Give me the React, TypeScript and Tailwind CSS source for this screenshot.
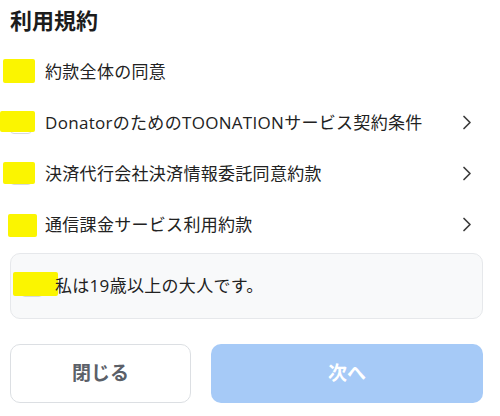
import React from "react";

const font = { fontFamily: '"Open Sans", "Noto Sans CJK JP", sans-serif' };

function Marker({ cls }: { cls: string }) {
  return (
    <span className="relative inline-block w-[22px] h-[22px] shrink-0">
      <span className="absolute inset-0 rounded-[4px] border border-[#d6d9de] bg-white" />
      <span className={`absolute bg-[#fbf500] rounded-[2px] ${cls}`} />
    </span>
  );
}

function Chevron() {
  return (
    <svg width="10" height="15" viewBox="0 0 10 15" className="shrink-0">
      <path d="M2 1.5 L8 7.5 L2 13.5" fill="none" stroke="#3c3c3c" strokeWidth="1.7" strokeLinecap="round" strokeLinejoin="round" />
    </svg>
  );
}

const rows = [
  { text: "約款全体の同意", chev: false, m: "left-[-7px] top-[-2px] w-[32px] h-[24px]" },
  { text: "DonatorのためのTOONATIONサービス契約条件", chev: true, m: "left-[-10px] top-[-1px] w-[35px] h-[21px]" },
  { text: "決済代行会社決済情報委託同意約款", chev: true, m: "left-[-7px] top-[-1px] w-[32px] h-[22px]" },
  { text: "通信課金サービス利用約款", chev: true, m: "left-[-2px] top-[0px] w-[29px] h-[23px]" },
];

export default function App() {
  return (
    <div className="w-[500px] h-[416px] bg-white overflow-hidden px-[10px] pt-[4px]" style={font}>
      <h1 className="text-[22px] leading-[32px] font-bold text-[#1c1c1c]">利用規約</h1>
      <div className="mt-[10px] flex flex-col">
        {rows.map((r, i) => (
          <div key={i} className="h-[51px] flex items-center pr-[18px]">
            <Marker cls={r.m} />
            <span className="ml-[13px] text-[17px] tracking-[0.3px] text-[#222] flex-1">{r.text}</span>
            {r.chev && <Chevron />}
          </div>
        ))}
      </div>
      <div className="mt-[3px] h-[66px] w-[473px] rounded-[10px] border border-[#e6e8eb] bg-[#f8f9fa] flex items-center pl-[10px]">
        <Marker cls="left-[-8px] top-[-3px] w-[45px] h-[24px]" />
        <span className="relative ml-[12px] text-[17px] tracking-[0.3px] text-[#222]">私は19歳以上の大人です。</span>
      </div>
      <div className="mt-[25px] flex gap-[20px] w-[473px]">
        <button className="w-[181px] h-[59px] rounded-[10px] border border-[#dcdfe3] bg-white text-[19px] font-bold text-[#5b6068]">
          閉じる
        </button>
        <button className="flex-1 h-[59px] rounded-[10px] bg-[#a6caf7] text-[19px] font-bold text-white">
          次へ
        </button>
      </div>
    </div>
  );
}
